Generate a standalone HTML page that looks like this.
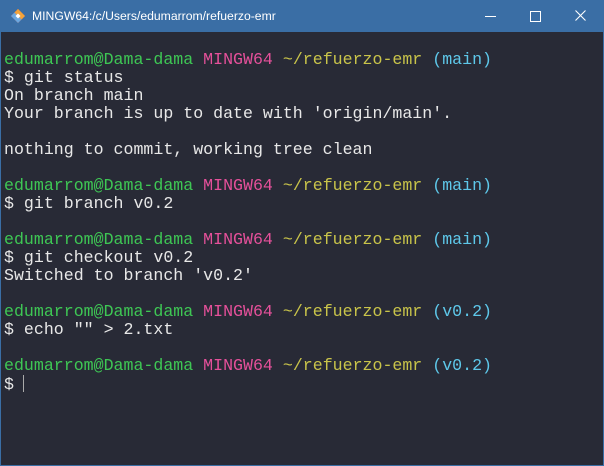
<!DOCTYPE html>
<html><head><meta charset="utf-8"><style>
html,body{margin:0;padding:0;width:604px;height:466px;overflow:hidden;background:#3a6ea5;}
.win{position:absolute;left:0;top:0;width:602px;height:464px;border:1px solid #3a6ea5;background:#282a36;}
.title{position:absolute;left:0;top:0;width:602px;height:31px;background:#3a6ea5;color:#fff;font:12.2px "Liberation Sans",sans-serif;}
.title span{position:absolute;left:31px;top:8px;}
.term{position:absolute;left:3px;top:32px;font-family:"Liberation Mono",monospace;font-size:16.6px;line-height:18px;color:#e8e8e8;white-space:pre;}
.g{color:#3ec754}.m{color:#e5509a}.y{color:#c9c44a}.c{color:#5ec8ea}
.cur{display:inline-block;width:1px;height:17px;background:#aaa;vertical-align:-3px;margin-left:-1px}
</style></head><body><div class="win">
<div class="title">
<svg style="position:absolute;left:9px;top:7px" width="16" height="16" viewBox="0 0 16 16"><path d="M8 1L15 8 8 15 1 8Z" fill="#e85c3a"/><path d="M8 1L15 8 11.5 11.5 4.5 4.5Z" fill="#f3a33a"/><path d="M1 8L4.5 4.5 11.5 11.5 8 15Z" fill="#6aa7e0"/><path d="M5.5 8L8 5.5 10.5 8 8 10.5Z" fill="#fff"/></svg>
<span>MINGW64:/c/Users/edumarrom/refuerzo-emr</span>
<div style="position:absolute;left:484px;top:15px;width:11px;height:1px;background:#fff"></div>
<div style="position:absolute;left:529px;top:10px;width:9px;height:9px;border:1px solid #fff"></div>
<svg style="position:absolute;left:574px;top:9px" width="11" height="11"><path d="M0.5 .5L10.5 10.5M10.5 .5L.5 10.5" stroke="#fff" stroke-width="1.1"/></svg>
</div>
<div class="term">
<span class="g">edumarrom@Dama-dama</span> <span class="m">MINGW64</span> <span class="y">~/refuerzo-emr</span> <span class="c">(main)</span>
$ git status
On branch main
Your branch is up to date with 'origin/main'.

nothing to commit, working tree clean

<span class="g">edumarrom@Dama-dama</span> <span class="m">MINGW64</span> <span class="y">~/refuerzo-emr</span> <span class="c">(main)</span>
$ git branch v0.2

<span class="g">edumarrom@Dama-dama</span> <span class="m">MINGW64</span> <span class="y">~/refuerzo-emr</span> <span class="c">(main)</span>
$ git checkout v0.2
Switched to branch 'v0.2'

<span class="g">edumarrom@Dama-dama</span> <span class="m">MINGW64</span> <span class="y">~/refuerzo-emr</span> <span class="c">(v0.2)</span>
$ echo "" &gt; 2.txt

<span class="g">edumarrom@Dama-dama</span> <span class="m">MINGW64</span> <span class="y">~/refuerzo-emr</span> <span class="c">(v0.2)</span>
$ <span class="cur"></span></div>
</div></body></html>
